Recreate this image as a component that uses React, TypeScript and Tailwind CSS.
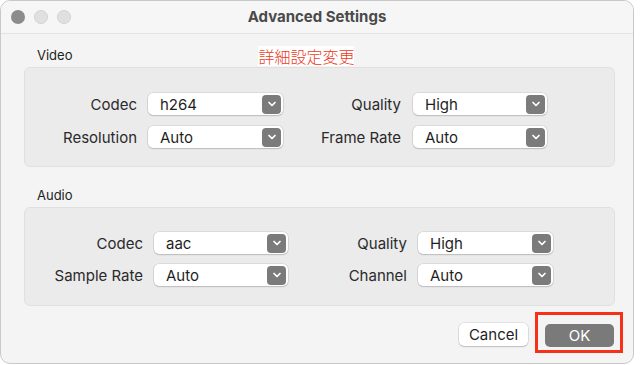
import type { ReactNode } from 'react';

const FONT = { fontFamily: 'Inter, "Liberation Sans", "Noto Sans CJK JP", sans-serif' };

function Chevron() {
  return (
    <svg width="10" height="10" viewBox="0 0 10 10" aria-hidden>
      <path d="M2 3.5 L5 6.5 L8 3.5" fill="none" stroke="#ffffff" strokeWidth="1.7" strokeLinecap="round" strokeLinejoin="round" />
    </svg>
  );
}

function Select({ value, width }: { value: string; width: string }) {
  return (
    <div
      className={`flex h-[22px] ${width} items-center rounded-[5px] bg-white pl-[12px] shadow-[0_0_0_0.5px_rgba(0,0,0,0.14),0_1px_1.5px_rgba(0,0,0,0.14)]`}
    >
      <span className="text-[15px] leading-none text-[#1f1f1f]">{value}</span>
      <span className="ml-auto mr-[2px] flex h-[19px] w-[19px] items-center justify-center rounded-[4px] bg-[#7b7b7b]">
        <Chevron />
      </span>
    </div>
  );
}

function Label({ children, width }: { children: ReactNode; width: string }) {
  return (
    <span className={`${width} h-[22px] pt-[2px] text-right text-[15px] leading-[20px] text-[#2a2a2a]`}>{children}</span>
  );
}

function SectionTitle({ children }: { children: ReactNode }) {
  return <span className="pl-[13px] text-[13px] text-[#222]">{children}</span>;
}

export default function App() {
  return (
    <div className="h-[365px] w-[640px] bg-white" style={FONT}>
      <div className="flex h-[364px] w-[634px] flex-col overflow-hidden rounded-[10px] border border-[#c9c9c9] bg-[#f4f4f4]">
        {/* title bar */}
        <div className="grid h-[33px] shrink-0 grid-cols-[1fr_auto_1fr] items-center border-b border-[#e3e3e3] bg-[#f6f6f6]">
          <div className="flex items-center gap-[9px] pl-[10px]">
            <span className="h-[14px] w-[14px] rounded-full bg-[#8c8c8c]" />
            <span className="h-[14px] w-[14px] rounded-full border border-[#d2d2d2] bg-[#e0e0e0]" />
            <span className="h-[14px] w-[14px] rounded-full border border-[#d2d2d2] bg-[#e0e0e0]" />
          </div>
          <span className="text-[15px] font-bold text-[#4a4a4a]">Advanced Settings</span>
          <div />
        </div>

        <div className="flex flex-col pl-[23px] pr-[18px]">
          {/* video */}
          <div className="mt-[12px] flex h-[20px] items-center">
            <SectionTitle>Video</SectionTitle>
            <span
              className="ml-[186px] bg-white text-[16px] leading-[20px] text-[#ec3a22]"
              style={{ fontFamily: '"Noto Sans CJK JP", serif', fontWeight: 300 }}
            >
              詳細設定変更
            </span>
          </div>
          <div className="mt-[1px] flex h-[100px] flex-col gap-[11px] rounded-[6px] border border-[#e0e0e0] bg-[#ebebeb] pt-[25px]">
            <div className="flex items-center">
              <Label width="w-[112px]">Codec</Label>
              <div className="ml-[11px]"><Select value="h264" width="w-[135px]" /></div>
              <Label width="w-[118px]">Quality</Label>
              <div className="ml-[12px]"><Select value="High" width="w-[134px]" /></div>
            </div>
            <div className="flex items-center">
              <Label width="w-[112px]">Resolution</Label>
              <div className="ml-[11px]"><Select value="Auto" width="w-[135px]" /></div>
              <Label width="w-[118px]">Frame Rate</Label>
              <div className="ml-[12px]"><Select value="Auto" width="w-[134px]" /></div>
            </div>
          </div>

          {/* audio */}
          <div className="mt-[19px] flex h-[20px] items-center">
            <SectionTitle>Audio</SectionTitle>
          </div>
          <div className="mt-[1px] flex h-[99px] flex-col gap-[10px] rounded-[6px] border border-[#e0e0e0] bg-[#ebebeb] pt-[24px]">
            <div className="flex items-center">
              <Label width="w-[118px]">Codec</Label>
              <div className="ml-[11px]"><Select value="aac" width="w-[134px]" /></div>
              <Label width="w-[119px]">Quality</Label>
              <div className="ml-[11px]"><Select value="High" width="w-[135px]" /></div>
            </div>
            <div className="flex items-center">
              <Label width="w-[118px]">Sample Rate</Label>
              <div className="ml-[11px]"><Select value="Auto" width="w-[134px]" /></div>
              <Label width="w-[119px]">Channel</Label>
              <div className="ml-[11px]"><Select value="Auto" width="w-[135px]" /></div>
            </div>
          </div>

          {/* buttons */}
          <div className="mt-[17px] flex justify-end gap-[17px] pr-[1px]">
            <button
              type="button"
              className="h-[23px] w-[69px] rounded-[5px] bg-white text-[15px] leading-none text-[#1f1f1f] shadow-[0_0_0_0.5px_rgba(0,0,0,0.14),0_1px_1.5px_rgba(0,0,0,0.16)]"
            >
              Cancel
            </button>
            <div className="relative">
              <button type="button" className="h-[23px] w-[69px] rounded-[5px] bg-[#7a7a7a] text-[15px] leading-none text-white">
                OK
              </button>
              <span className="pointer-events-none absolute left-[-10px] top-[-11px] h-[41px] w-[88px] border-[3px] border-[#f5311a]" />
            </div>
          </div>
        </div>
      </div>
    </div>
  );
}
